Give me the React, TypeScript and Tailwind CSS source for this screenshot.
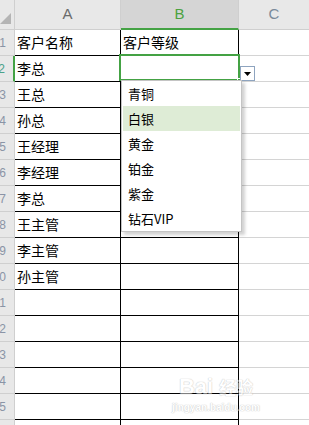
import React from 'react'

const names = ['客户名称', '李总', '王总', '孙总', '王经理', '李经理', '李总', '王主管', '李主管', '孙主管', '', '', '', '', '', '']
const levels = ['青铜', '白银', '黄金', '铂金', '紫金', '钻石VIP']

const cjk = { fontFamily: '"Noto Sans CJK SC", "Liberation Sans", sans-serif' }

export default function App() {
  return (
    <div className="relative w-[309px] h-[425px] overflow-hidden bg-white" style={cjk}>
      {/* 列头 */}
      <div className="grid grid-cols-[15px_106px_118px_1fr] h-[30px]">
        <div className="relative bg-[#e8e8e8] border-r border-b border-[#cfcfcf]">
          <svg className="absolute left-0 top-[13px]" width="11" height="11" viewBox="0 0 11 11">
            <polygon points="0,11 11,0 11,11" fill="#b4b4b4" />
          </svg>
        </div>
        <div className="flex items-center justify-center bg-[#e8e8e8] border-r border-b border-[#cfcfcf] text-[15px] text-[#6b6b6b] font-['Liberation_Sans']">A</div>
        <div className="flex items-center justify-center bg-[#d5d5d5] border-r border-[#cfcfcf] border-b-2 border-b-[#44a244] text-[15px] text-[#4ba240] font-['Liberation_Sans']">B</div>
        <div className="flex items-center justify-center bg-[#e8e8e8] border-b border-[#cfcfcf] text-[15px] text-[#7a8a9a] font-['Liberation_Sans']">C</div>
      </div>

      {/* 行 */}
      {names.map((name, i) => (
        <div key={i} className="grid grid-cols-[15px_106px_118px_1fr] h-[26px]">
          <div
            className={`flex items-center justify-end overflow-hidden pr-[8px] bg-[#e8e8e8] border-b border-[#cfcfcf] text-[12px] font-['Liberation_Sans'] ${
              i === 1 ? 'border-r-2 border-r-[#44a244] text-[#4ba28a]' : 'border-r border-r-[#cfcfcf] text-[#8a94a6]'
            }`}
          >
            {i + 1}
          </div>
          <div className="flex items-center pl-[2px] border-r border-b border-black text-[14px] text-black">{name}</div>
          <div className="flex items-center pl-[2px] border-r border-b border-black text-[14px] text-black">{i === 0 ? '客户等级' : ''}</div>
          <div className="border-b border-[#d4d4d4]" />
        </div>
      ))}

      {/* 选中单元格 */}
      <div className="absolute left-[119px] top-[54px] w-[121px] h-[27px] border-2 border-[#44a244]" />
      <div className="absolute left-[237px] top-[78px] w-[4px] h-[4px] bg-[#44a244] border border-white" />

      {/* 下拉按钮 */}
      <div className="absolute left-[240px] top-[66px] w-[15px] h-[15px] flex items-center justify-center bg-white border border-[#8ea4bf]">
        <svg width="7" height="4" viewBox="0 0 7 4">
          <polygon points="0,0 7,0 3.5,4" fill="#000" />
        </svg>
      </div>

      {/* 下拉列表 */}
      <div className="absolute left-[121px] top-[80px] w-[121px] h-[152px] bg-white border border-[#c4c4c4] shadow-[3px_3px_3px_rgba(0,0,0,0.18)] px-[1px]">
        {levels.map((lv, i) => (
          <div
            key={lv}
            className={`flex items-center h-[25px] pl-[5px] text-[13px] text-black ${i === 1 ? 'bg-[#deecd6]' : ''}`}
          >
            {lv}
          </div>
        ))}
      </div>

      {/* 水印 */}
      <div className="absolute left-[136px] top-[374px] w-[200px] flex flex-col items-center pointer-events-none opacity-50 -translate-x-[20px]">
        <div className="flex items-center gap-[6px] text-[22px] leading-[26px] font-bold text-white font-['Liberation_Sans'] [text-shadow:0_0_1px_#999,0_0_1px_#999]">
          <span>Bai</span>
          <span className="text-[17px]" style={cjk}>经验</span>
        </div>
        <div className="text-[10px] font-bold text-white font-['Liberation_Sans'] [text-shadow:0_0_1px_#999,0_0_1px_#999]">
          jingyan.baidu.com
        </div>
      </div>
    </div>
  )
}
